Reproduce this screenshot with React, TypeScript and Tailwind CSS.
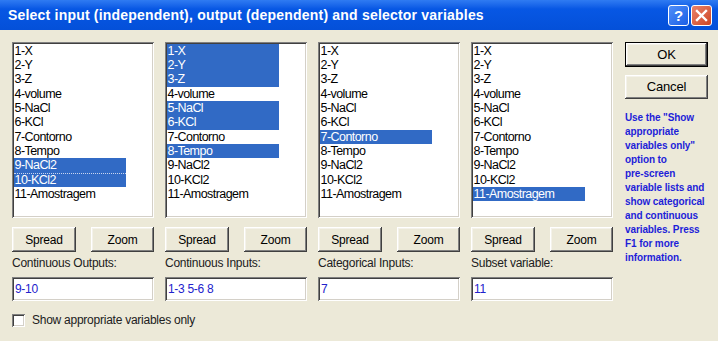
const ITEMS = [
  '1-X',
  '2-Y',
  '3-Z',
  '4-volume',
  '5-NaCl',
  '6-KCl',
  '7-Contorno',
  '8-Tempo',
  '9-NaCl2',
  '10-KCl2',
  '11-Amostragem',
]

interface VarColumn {
  label: string
  value: string
  selected: number[]
  focus?: number
}

const COLUMNS: VarColumn[] = [
  { label: 'Continuous Outputs:', value: '9-10', selected: [9, 10], focus: 10 },
  { label: 'Continuous Inputs:', value: '1-3 5-6 8', selected: [1, 2, 3, 5, 6, 8] },
  { label: 'Categorical Inputs:', value: '7', selected: [7] },
  { label: 'Subset variable:', value: '11', selected: [11] },
]

const sunken =
  'bg-white shadow-[inset_1px_1px_#808080,inset_-1px_-1px_#ffffff,inset_2px_2px_#404040,inset_-2px_-2px_#d4d0c8]'
const raised =
  'bg-[#ECE9D8] shadow-[inset_-1px_-1px_#404040,inset_1px_1px_#ffffff,inset_-2px_-2px_#808080,inset_2px_2px_#f4f2ea]'

function Btn({ children, className = '' }: { children: string; className?: string }) {
  return (
    <div
      className={`flex items-center justify-center text-[12px] tracking-[-0.2px] text-black ${raised} ${className}`}
    >
      {children}
    </div>
  )
}

function VarList({ col }: { col: VarColumn }) {
  return (
    <div className={`h-[176px] w-[142px] p-[2px] ${sunken}`}>
      {ITEMS.map((item, i) => {
        const sel = col.selected.includes(i + 1)
        return (
          <div
            key={item}
            className={`flex h-[14.3px] w-[112px] items-center pl-[0.5px] text-[12.5px] leading-none tracking-[-0.55px] ${
              sel ? 'bg-[#316AC5] text-white' : 'text-black'
            } ${col.focus === i + 1 ? 'border-t border-dotted border-[#c8d4ee]' : ''}`}
          >
            {item}
          </div>
        )
      })}
    </div>
  )
}

export default function App() {
  return (
    <div
      className="h-[341px] w-[718px] overflow-hidden bg-[#ECE9D8]"
      style={{ fontFamily: '"Liberation Sans", Arial, sans-serif' }}
    >
      <div className="flex h-[30px] items-center justify-between bg-gradient-to-b from-[#2f7bf2] via-[#0757e4] via-30% to-[#0450d9] pl-[8px] pr-[6px]">
        <span className="text-[14px] font-bold tracking-[0.2px] text-white">
          Select input (independent), output (dependent) and selector variables
        </span>
        <div className="flex gap-[2px]">
          <div className="flex h-[21px] w-[21px] items-center justify-center rounded-[3px] border border-white bg-gradient-to-br from-[#4f8ef8] to-[#1a5ee6] text-[15px] font-bold leading-none text-white">
            ?
          </div>
          <div className="flex h-[21px] w-[21px] items-center justify-center rounded-[3px] border border-white bg-gradient-to-br from-[#e9826a] to-[#cd4420]">
            <svg width="13" height="13" viewBox="0 0 13 13">
              <path d="M2 2 L11 11 M11 2 L2 11" stroke="white" strokeWidth="2.4" strokeLinecap="square" />
            </svg>
          </div>
        </div>
      </div>

      <div className="pl-[12px] pt-[12px]">
        <div className="flex">
          <div className="flex gap-[11px]">
            {COLUMNS.map((col) => (
              <div key={col.label} className="flex w-[142px] flex-col">
                <VarList col={col} />
                <div className="mt-[9px] flex justify-between">
                  <Btn className="h-[25px] w-[64px]">Spread</Btn>
                  <Btn className="h-[25px] w-[63px]">Zoom</Btn>
                </div>
                <div className="mt-[4px] text-[12px] leading-[14px] tracking-[-0.25px] text-[#202020]">
                  {col.label}
                </div>
                <div
                  className={`mt-[7px] flex h-[24px] items-center pl-[3px] text-[12px] tracking-[-0.3px] text-[#2222cc] ${sunken}`}
                >
                  {col.value}
                </div>
              </div>
            ))}
          </div>

          <div className="ml-[12px] flex w-[84px] flex-col">
            <div className="h-[25px] w-[83px] border border-black">
              <Btn className="h-full w-full text-[13px]">OK</Btn>
            </div>
            <Btn className="mt-[8px] h-[24px] w-[83px] text-[13px]">Cancel</Btn>
            <p className="mt-[12px] text-[10px] font-bold leading-[14px] tracking-[-0.1px] text-[#1e1ed8]">
              Use the "Show
              <br />
              appropriate
              <br />
              variables only"
              <br />
              option to
              <br />
              pre-screen
              <br />
              variable lists and
              <br />
              show categorical
              <br />
              and continuous
              <br />
              variables. Press
              <br />
              F1 for more
              <br />
              information.
            </p>
          </div>
        </div>

        <div className="mt-[10px] flex items-center gap-[7px]">
          <div className={`h-[13px] w-[13px] ${sunken}`} />
          <span className="text-[12px] tracking-[-0.25px] text-[#202020]">
            Show appropriate variables only
          </span>
        </div>
      </div>
    </div>
  )
}
